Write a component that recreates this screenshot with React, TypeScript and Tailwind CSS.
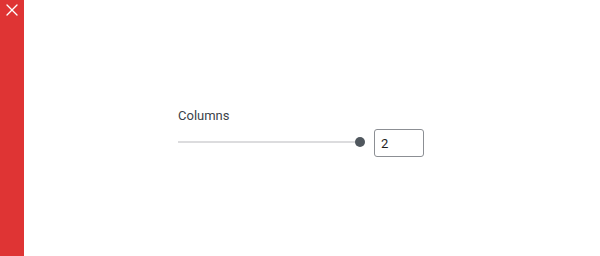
import { X } from "lucide-react";

export default function App() {
  return (
    <div className="flex h-[256px] w-[600px] bg-white" style={{ fontFamily: "Roboto, 'Noto Sans', sans-serif" }}>
      {/* Close strip */}
      <div className="w-[24px] h-full bg-[#df3434] flex justify-center">
        <X size={20} strokeWidth={1.6} className="text-white" />
      </div>

      {/* Control */}
      <div className="flex-1 pl-[154px] pt-[108px]">
        <label className="block text-[13px] leading-[16px] text-[#3c434a]">Columns</label>
        <div className="mt-[5px] flex items-center w-[246px]">
          <div className="relative flex-1 h-[28px] flex items-center pb-[3px] mr-[4px]">
            <div className="h-[2px] w-full bg-[#dcdcde]" />
            <div className="absolute right-[-1px] w-[10px] h-[10px] rounded-full bg-[#50575e]" />
          </div>
          <input
            type="number"
            defaultValue={2}
            className="ml-[6px] w-[50px] h-[28px] px-[6px] text-[13px] text-[#1e1e1e] border border-[#8c8f94] rounded-[3px] outline-none [appearance:textfield]"
          />
        </div>
      </div>
    </div>
  );
}
